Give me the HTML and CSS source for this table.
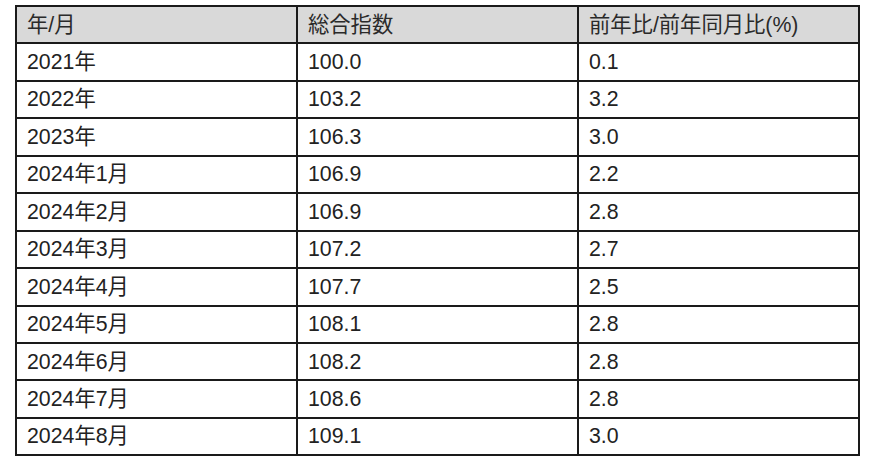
FILE: index.html
```html
<!DOCTYPE html>
<html lang="ja">
<head>
<meta charset="utf-8">
<link rel="stylesheet" href="styles.css">
</head>
<body>
<table class="data">
  <colgroup><col class="c"><col class="c"><col class="c"></colgroup>
  <thead>
    <tr><th>年/月</th><th>総合指数</th><th>前年比/前年同月比(%)</th></tr>
  </thead>
  <tbody>
    <tr><td>2021年</td><td>100.0</td><td>0.1</td></tr>
    <tr><td>2022年</td><td>103.2</td><td>3.2</td></tr>
    <tr><td>2023年</td><td>106.3</td><td>3.0</td></tr>
    <tr><td>2024年1月</td><td>106.9</td><td>2.2</td></tr>
    <tr><td>2024年2月</td><td>106.9</td><td>2.8</td></tr>
    <tr><td>2024年3月</td><td>107.2</td><td>2.7</td></tr>
    <tr><td>2024年4月</td><td>107.7</td><td>2.5</td></tr>
    <tr><td>2024年5月</td><td>108.1</td><td>2.8</td></tr>
    <tr><td>2024年6月</td><td>108.2</td><td>2.8</td></tr>
    <tr><td>2024年7月</td><td>108.6</td><td>2.8</td></tr>
    <tr><td>2024年8月</td><td>109.1</td><td>3.0</td></tr>
  </tbody>
</table>
</body>
</html>
```
FILE: styles.css
```css
html, body {
  margin: 0;
  background: #ffffff;
}
body {
  padding: 5px 12px 0 15px;
  font-family: "Liberation Sans", "Noto Sans CJK JP", sans-serif;
  color: #222222;
}
.data {
  width: 843px;
  border-collapse: collapse;
  table-layout: fixed;
  font-size: 21.3px;
}
.data .c {
  width: 281px;
}
.data th,
.data td {
  border: 2px solid #1a1a1a;
  height: 37.45px;
  padding: 1px 10px 0;
  text-align: left;
  vertical-align: middle;
  font-weight: normal;
  line-height: 1;
  box-sizing: border-box;
}
.data th {
  background: #d9d9d9;
  color: #2a2a2a;
}
```
